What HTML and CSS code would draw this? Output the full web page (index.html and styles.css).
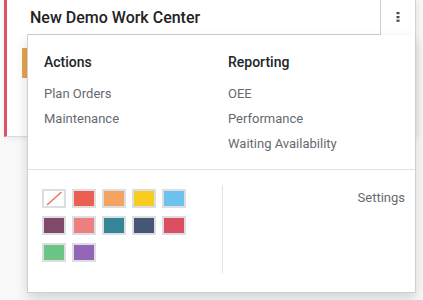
FILE: index.html
```html
<!DOCTYPE html>
<html lang="en">

<head>
    <meta charset="UTF-8">
    <title>Work Center</title>
    <link rel="stylesheet" href="styles.css">
</head>

<body>
    <div class="kanban-view">
        <div class="kanban-card">
            <!-- Card header -->
            <div class="card-top">
                <div class="card-title">New Demo Work Center</div>
                <span class="manage-toggle">
                    <svg width="4" height="12" viewBox="0 0 4 12">
                        <rect x="0.5" y="0" width="3" height="2.2" fill="#4a4a4a" />
                        <rect x="0.5" y="4" width="3" height="2.2" fill="#4a4a4a" />
                        <rect x="0.5" y="7.6" width="3" height="2.2" fill="#4a4a4a" />
                    </svg>
                </span>
            </div>
            <div class="card-body">
                <div class="state-bar"></div>
            </div>

            <!-- Manage dropdown (open) -->
            <div class="manage-menu">
                <div class="menu-columns">
                    <div class="menu-col">
                        <h5>Actions</h5>
                        <a href="#">Plan Orders</a>
                        <a href="#">Maintenance</a>
                    </div>
                    <div class="menu-col">
                        <h5>Reporting</h5>
                        <a href="#">OEE</a>
                        <a href="#">Performance</a>
                        <a href="#">Waiting Availability</a>
                    </div>
                </div>
                <div class="menu-bottom">
                    <div class="menu-footer">
                        <div class="colorpicker">
                            <a href="#" class="swatch no-color">
                                <svg width="20" height="15" viewBox="0 0 20 15">
                                    <line x1="3" y1="14" x2="17.5" y2="1" stroke="#ea6a5c" stroke-width="1.3" />
                                </svg>
                            </a>
                            <a href="#" class="swatch c1"></a>
                            <a href="#" class="swatch c2"></a>
                            <a href="#" class="swatch c3"></a>
                            <a href="#" class="swatch c4"></a>
                            <a href="#" class="swatch c5"></a>
                            <a href="#" class="swatch c6"></a>
                            <a href="#" class="swatch c7"></a>
                            <a href="#" class="swatch c8"></a>
                            <a href="#" class="swatch c9"></a>
                            <a href="#" class="swatch c10"></a>
                            <a href="#" class="swatch c11"></a>
                        </div>
                    </div>
                    <div class="settings-col">
                        <a href="#">Settings</a>
                    </div>
                </div>
            </div>
        </div>
    </div>
</body>

</html>
```

FILE: styles.css
```css
html, body {
    min-height: 300px;
}

body {
    margin: 0;
    padding: 0;
    background-color: #f9f9f9;
    font-family: Roboto, "Noto Sans", sans-serif;
    color: #212529;
}

.kanban-view {
    height: 300px;
}

/* Kanban card */
.kanban-card {
    position: relative;
    box-sizing: border-box;
    margin-left: 4px;
    width: 412px;
    height: 137px;
    background-color: #ffffff;
    border-left: 3px solid #dc5266;
    border-right: 1px solid #cfd5dc;
    border-bottom: 1px solid #d8dbdf;
    box-shadow: 2px 1px 6px rgba(0, 0, 0, 0.08);
}

.card-top {
    display: flex;
    align-items: center;
    height: 35px;
}

.card-title {
    box-sizing: border-box;
    margin-left: 20px;
    width: 354px;
    height: 35px;
    padding-left: 3px;
    padding-top: 8px;
    font-size: 16px;
    font-weight: 500;
    color: #222;
    border-right: 1px solid #c8d0da;
    border-bottom: 1px solid #c8d0da;
}

.manage-toggle {
    display: flex;
    margin-left: 15px;
    padding-top: 1px;
}

.card-body {
    padding-top: 13px;
}

.state-bar {
    margin-left: 15px;
    width: 5px;
    height: 30px;
    background-color: #eba44b;
}

/* Dropdown menu */
.manage-menu {
    position: absolute;
    top: 35px;
    left: 20px;
    box-sizing: border-box;
    width: 389px;
    background-color: #ffffff;
    border: 1px solid #c8d0da;
    border-top: none;
    box-shadow: 0 6px 12px rgba(0, 0, 0, 0.15);
    z-index: 10;
}

.menu-columns {
    display: grid;
    grid-template-columns: 184px 184px;
    padding: 17px 0 13px 16px;
}

.menu-col h5 {
    margin: 0 0 9px 0;
    font-size: 14px;
    line-height: 20px;
    font-weight: 500;
    color: #212529;
}

.menu-col a {
    display: block;
    height: 25px;
    line-height: 25px;
    font-size: 13px;
    color: #666a70;
    text-decoration: none;
}

.menu-bottom {
    display: flex;
    border-top: 1px solid #dee2e6;
    padding: 15px 0 19px 0;
}

.menu-footer {
    width: 180px;
    height: 84px;
    padding: 4px 0 0 14px;
    border-right: 1px solid #e1e3e6;
}

.colorpicker {
    display: grid;
    grid-template-columns: repeat(5, 24px);
    grid-auto-rows: 19px;
    gap: 8px 6px;
}

.swatch {
    display: block;
    box-sizing: border-box;
    width: 24px;
    height: 19px;
    border: 2px solid #dcdee2;
}

.no-color {
    background-color: #ffffff;
}

.no-color svg {
    display: block;
}

.c1 { background-color: #eb5e50; }
.c2 { background-color: #f4a460; }
.c3 { background-color: #f7cd22; }
.c4 { background-color: #6cc1ed; }
.c5 { background-color: #814968; }
.c6 { background-color: #ec7f80; }
.c7 { background-color: #368597; }
.c8 { background-color: #475577; }
.c9 { background-color: #dc4f62; }
.c10 { background-color: #6cc585; }
.c11 { background-color: #9366b8; }

.settings-col {
    flex: 1;
    text-align: right;
    padding: 2px 10px 0 0;
}

.settings-col a {
    font-size: 13px;
    line-height: 18px;
    color: #666a70;
    text-decoration: none;
}
```
